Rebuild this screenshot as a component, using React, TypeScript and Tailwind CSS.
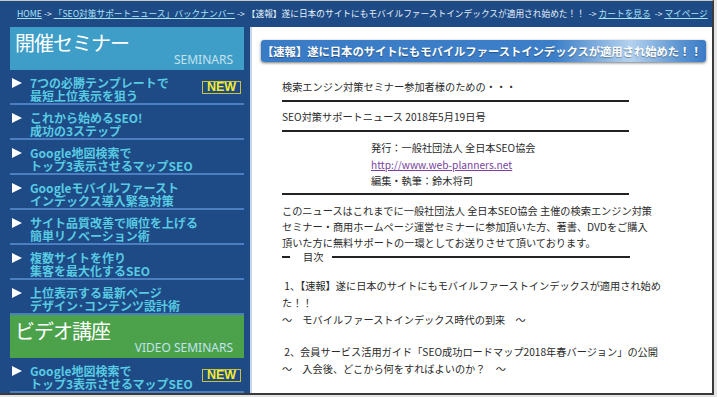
import React from "react";

const JP = { fontFamily: '"Noto Sans CJK JP", "Noto Sans", sans-serif' };

function Tri() {
  return (
    <svg width="10" height="10" viewBox="0 0 10 10" className="shrink-0 mt-[2px]">
      <polygon points="0,0 10,5 0,10" fill="#ffffff" />
    </svg>
  );
}

function Item({ l1, l2, isNew }: { l1: string; l2: string; isNew?: boolean }) {
  return (
    <div className="relative h-[36px] border-b-2 border-[#4c7fc2] pt-[6px] pl-[2px] flex">
      <Tri />
      <div className="ml-[8px] text-[12px] leading-[13px] font-bold text-[#58cbe3] whitespace-nowrap">
        <div>{l1}</div>
        <div>{l2}</div>
      </div>
      {isNew && (
        <div className="absolute right-[3px] top-[11px] w-[39px] h-[13px] border border-[#c9c23a] flex items-center justify-center text-[12.5px] leading-none font-bold text-[#f2ea2c]" style={{ fontFamily: '"Liberation Sans", Arial, sans-serif' }}>
          NEW
        </div>
      )}
    </div>
  );
}

function Header({ jp, en, color }: { jp: string; en: string; color: string }) {
  return (
    <div className={`h-[44px] ${color} relative pl-[5px]`}>
      <div className="text-[20px] leading-[20px] pt-[6px] text-white tracking-[-1px]">{jp}</div>
      <div className="absolute right-[11px] bottom-[3px] text-[12px] leading-[14px] text-[#c4e2ee]" style={{ fontFamily: '"Noto Sans", sans-serif' }}>
        {en}
      </div>
    </div>
  );
}

function Line({ children, h = "h-[16px] leading-[16px]", cls = "" }: { children: React.ReactNode; h?: string; cls?: string }) {
  return <div className={`${h} whitespace-nowrap ${cls}`}>{children}</div>;
}

export default function App() {
  return (
    <div className="w-[717px] h-[397px] overflow-hidden bg-[#e4e4e4]" style={JP}>
      <div className="w-[714px] h-[395px] mt-[0px] border-t border-[#c8c8c8] border-r-2 border-b-2 border-r-[#3a3a3a] border-b-[#3a3a3a] bg-[#1e4a86] flex flex-col">
        {/* breadcrumb */}
        <div className="h-[26px] pl-[17px] flex items-center text-[8.7px] text-[#e4f0fa] whitespace-pre shrink-0">
          <span className="underline text-[#a8e4f8]">HOME</span>
          <span>{" -> "}</span>
          <span className="underline text-[#a8e4f8]">「SEO対策サポートニュース」バックナンバー</span>
          <span>{" -> "}</span>
          <span>【速報】遂に日本のサイトにもモバイルファーストインデックスが適用され始めた！！</span>
          <span>{"  -> "}</span>
          <span className="underline text-[#a8e4f8]">カートを見る</span>
          <span>{"  -> "}</span>
          <span className="underline text-[#a8e4f8]">マイページ</span>
        </div>

        <div className="flex flex-1 min-h-0">
          {/* sidebar */}
          <div className="w-[234px] ml-[10px] shrink-0 flex flex-col">
            <Header jp="開催セミナー" en="SEMINARS" color="bg-[#3e9ec8]" />
            <Item l1="7つの必勝テンプレートで" l2="最短上位表示を狙う" isNew />
            <Item l1="これから始めるSEO!" l2="成功の3ステップ" />
            <Item l1="Google地図検索で" l2="トップ3表示させるマップSEO" />
            <Item l1="Googleモバイルファースト" l2="インデックス導入緊急対策" />
            <Item l1="サイト品質改善で順位を上げる" l2="簡単リノベーション術" />
            <Item l1="複数サイトを作り" l2="集客を最大化するSEO" />
            <Item l1="上位表示する最新ページ" l2="デザイン･コンテンツ設計術" />
            <Header jp="ビデオ講座" en="VIDEO SEMINARS" color="bg-[#4ba24b]" />
            <Item l1="Google地図検索で" l2="トップ3表示させるマップSEO" isNew />
          </div>

          {/* main */}
          <div className="ml-[6px] flex-1 bg-white border-l-2 border-[#c9d6e8] overflow-hidden flex flex-col">
            <div
              className="ml-[9px] mr-[6px] mt-[13px] h-[22px] rounded-[3px] shadow-[0_1px_3px_rgba(0,0,0,0.55)] flex items-center pl-[1px] text-[11.3px] font-bold text-white whitespace-nowrap shrink-0"
              style={{
                background:
                  "linear-gradient(90deg, #3a7bc6 0%, #3c7fc8 66%, #b4d2ef 83%, #5c95d2 94%, #3a7bc6 100%)",
                textShadow: "0 1px 1px rgba(0,0,0,0.35)",
              }}
            >
              【速報】遂に日本のサイトにもモバイルファーストインデックスが適用され始めた！！
            </div>

            <div className="pl-[30px] text-[10.2px] text-[#2a2a2a] flex flex-col">
              <Line cls="mt-[17px]">検索エンジン対策セミナー参加者様のための・・・</Line>
              <div className="mt-[5px] h-[2px] w-[347px] bg-[#222]" />
              <Line cls="mt-[7px]">SEO対策サポートニュース 2018年5月19日号</Line>
              <div className="mt-[5px] h-[2px] w-[347px] bg-[#222]" />
              <div className="mt-[8px] pl-[89px]">
                <Line h="h-[16.5px] leading-[16.5px]">発行：一般社団法人 全日本SEO協会</Line>
                <Line h="h-[16.5px] leading-[16.5px]">
                  <span className="underline text-[#7b3fa0]">http://www.web-planners.net</span>
                </Line>
                <Line h="h-[16.5px] leading-[16.5px]">編集・執筆：鈴木将司</Line>
              </div>
              <div className="mt-[3.5px] h-[2px] w-[347px] bg-[#222]" />
              <div className="mt-[8px]">
                <Line>このニュースはこれまでに一般社団法人 全日本SEO協会 主催の検索エンジン対策</Line>
                <Line>セミナー・商用ホームページ運営セミナーに参加頂いた方、著書、DVDをご購入</Line>
                <Line>頂いた方に無料サポートの一環としてお送りさせて頂いております。</Line>
              </div>
              <div className="h-[12px] flex items-center whitespace-nowrap">
                <div className="w-[8px] h-[2px] bg-[#222]" />
                <span className="ml-[13px]">目次</span>
                <div className="ml-[9px] w-[298px] h-[2px] bg-[#222]" />
              </div>
              <div className="mt-[13.5px]">
                <Line h="h-[17px] leading-[17px]">&nbsp;1、【速報】遂に日本のサイトにもモバイルファーストインデックスが適用され始め</Line>
                <Line h="h-[17px] leading-[17px]">た！！</Line>
                <Line h="h-[17px] leading-[17px]">～　モバイルファーストインデックス時代の到来　～</Line>
              </div>
              <div className="mt-[15px]">
                <Line h="h-[17px] leading-[17px]">&nbsp;2、会員サービス活用ガイド「SEO成功ロードマップ2018年春バージョン」の公開</Line>
                <Line h="h-[17px] leading-[17px]">～　入会後、どこから何をすればよいのか？　～</Line>
              </div>
              <div className="mt-[15px]">
                <Line h="h-[17px] leading-[17px]">&nbsp;3、会員サービス活用ガイド「SEO対策の基本」の公開</Line>
              </div>
            </div>
          </div>
        </div>
      </div>
    </div>
  );
}
